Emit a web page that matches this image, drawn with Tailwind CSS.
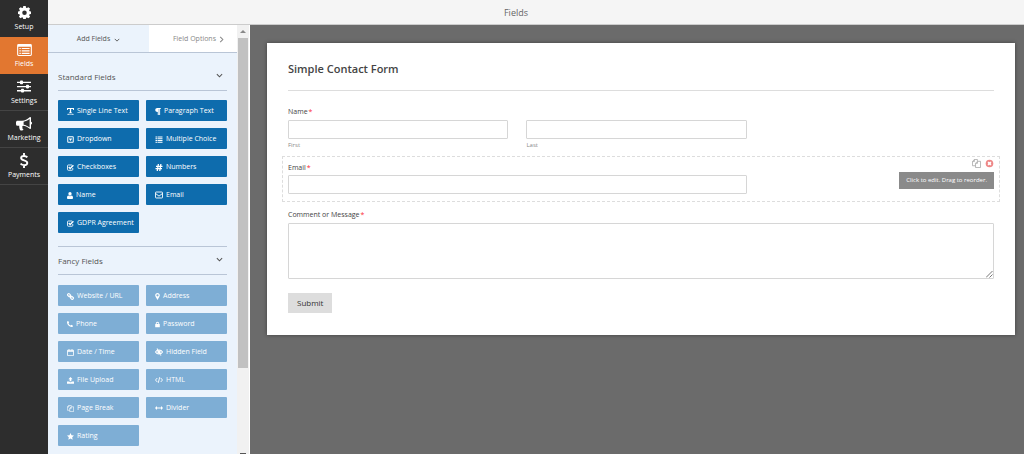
<!DOCTYPE html>
<html lang="en">
<head>
    <meta charset="UTF-8">
    <meta name="viewport" content="width=device-width, initial-scale=1.0">
    <title>Form Builder - Fields</title>
    <script src="https://cdn.jsdelivr.net/npm/@tailwindcss/browser@4"></script>
</head>
<body class="flex h-screen overflow-hidden bg-[#6b6b6b] font-['Open_Sans','Noto_Sans',sans-serif] text-[#444]">
    <!-- Icon sprite -->
    <svg class="hidden">
        <symbol id="i-gear" viewBox="0 0 16 16"><path fill-rule="evenodd" d="M6.500 0h3l.4 2.100 1.100.5 1.800-1.200 2.100 2.100-1.200 1.800.5 1.100 2.100.4v3l-2.100.4-.5 1.100 1.200 1.800-2.100 2.100-1.800-1.200-1.100.5-.4 2.100h-3l-.4-2.100-1.100-.5-1.800 1.200-2.100-2.100 1.200-1.800-.5-1.100L-.3 9.800v-3l2.100-.4.5-1.100-1.200-1.800 2.100-2.100L5 2.600l1.100-.5zM8 5.500a2.800 2.800 0 1 0 0 5.600 2.800 2.800 0 0 0 0-5.600z"/></symbol>
        <symbol id="i-list" viewBox="0 0 16 13"><path fill-rule="evenodd" d="M1.500 0h13A1.500 1.500 0 0 1 16 1.500v10a1.500 1.500 0 0 1-1.500 1.500h-13A1.500 1.500 0 0 1 0 11.500v-10A1.500 1.500 0 0 1 1.500 0zM1.200 3v8.300c0 .3.200.5.500.5h12.600c.3 0 .5-.2.500-.5V3zM2.500 4.200h1.500v1.300H2.500zM5 4.200h8.500v1.300H5zM2.500 6.800h1.500v1.300H2.500zM5 6.800h8.500v1.300H5zM2.500 9.400h1.500v1.300H2.500zM5 9.400h8.500v1.300H5z"/></symbol>
        <symbol id="i-sliders" viewBox="0 0 14 12"><path d="M0 1.200h14v1.300H0zM0 5.400h14v1.300H0zM0 9.600h14v1.300H0z"/><rect x="3" y="0" width="3" height="3.700" rx=".8"/><rect x="9" y="4.200" width="3" height="3.700" rx=".8"/><rect x="4" y="8.300" width="3" height="3.700" rx=".8"/></symbol>
        <symbol id="i-horn" viewBox="0 0 16 14"><path fill-rule="evenodd" d="M14 0c.6 0 1 .4 1 1v3.800a1.400 1.400 0 0 1 0 2.700V11c0 .6-.4 1-1 1-2.200-1.900-4.500-3-7-3.200-.8.3-1 1.200-.4 1.800-.5.800.1 1.400 1 2-.6 1.100-2.700 1.100-3.600.3-.5-1.500-1.100-2.700-.6-4.100H1.500A1.500 1.500 0 0 1 0 7.300V5.200c0-.8.700-1.500 1.500-1.500H6C8.700 3.700 11.400 2.300 14 0zM13.600 2C11.600 3.500 9.600 4.400 7.600 4.700v3.100c2 .3 4 1.200 6 2.700z"/></symbol>
        <symbol id="i-dollar" viewBox="0 0 10 16"><path fill="none" stroke="currentColor" stroke-width="2" d="M8.600 4.600C7.600 3.700 6.500 3.200 5 3.200c-1.900 0-3.100.9-3.100 2.200C1.900 8.600 8.500 7.200 8.500 10.600c0 1.400-1.300 2.300-3.300 2.300-1.700 0-2.900-.6-3.900-1.600M5 0v3M5 13v3"/></symbol>
        <symbol id="i-text" viewBox="0 0 14 14"><path d="M0 0h14v4h-1.700L12 2H8.300v7H10v1.600H4V9h1.700V2H2l-.3 2H0zM3 11l-3 1.300L3 14v-1h8v1l3-1.700L11 11v1H3z"/></symbol>
        <symbol id="i-para" viewBox="2 0 11 14"><path d="M6 0h7v2h-1.300v12H9.900V2H9v12H7V8C3.700 8 2 6.500 2 4s1.700-4 4-4z"/></symbol>
        <symbol id="i-drop" viewBox="0 0 14 14"><path fill-rule="evenodd" d="M2.500.5h9a2 2 0 0 1 2 2v9a2 2 0 0 1-2 2h-9a2 2 0 0 1-2-2v-9a2 2 0 0 1 2-2zm0 2v9h9v-9zM3.500 5h7L7 10z"/></symbol>
        <symbol id="i-choice" viewBox="0 0 14 14"><path d="M0 1h3v2H0zM4 1h10v2H4zM0 4.500h3v2H0zM4 4.500h10v2H4zM0 8h3v2H0zM4 8h10v2H4zM0 11.500h3v2H0zM4 11.500h10v2H4z"/></symbol>
        <symbol id="i-check" viewBox="0 0 14 14"><path fill="none" stroke="currentColor" stroke-width="1.700" d="M11.500 8v3a1.500 1.500 0 0 1-1.500 1.500H2.500A1.500 1.500 0 0 1 1 11V3.500A1.500 1.500 0 0 1 2.500 2H10"/><path fill="none" stroke="currentColor" stroke-width="2.800" d="M3.500 6l2.800 2.800 6.500-6.500"/></symbol>
        <symbol id="i-hash" viewBox="0 0 14 14"><path fill="none" stroke="currentColor" stroke-width="2.600" d="M5.800 0L3.500 14M10.800 0L8.500 14M1 4.700H14M0 9.300h13"/></symbol>
        <symbol id="i-user" viewBox="1 0 12 14"><path d="M7 0c2 0 3.200 1.500 3.200 3.600S9 7.500 7 7.500 3.800 5.700 3.800 3.600 5 0 7 0zM3.800 7c1.900 1.700 4.500 1.700 6.400 0C12 7.400 13 9 13 11.500c0 1.400-.7 2.500-2 2.500H3c-1.300 0-2-1.100-2-2.500C1 9 2 7.400 3.800 7z"/></symbol>
        <symbol id="i-mail" viewBox="0 0 14 14"><g fill="none" stroke="currentColor" stroke-width="1.600"><rect x=".8" y="1.800" width="12.400" height="10.400" rx="1.200"/><path d="M.8 4.200L7 9l6.200-4.800"/></g></symbol>
        <symbol id="i-link" viewBox="0 0 14 14"><g fill="none" stroke="currentColor" stroke-width="2.200"><rect x="1" y="2" width="6.500" height="4.500" rx="2" transform="rotate(45 4.200 4.200)"/><rect x="6.500" y="7.500" width="6.500" height="4.500" rx="2" transform="rotate(45 9.800 9.800)"/><path d="M5 5l4 4"/></g></symbol>
        <symbol id="i-pin" viewBox="2 0 10 14"><path fill-rule="evenodd" d="M7 0c2.700 0 4.700 2 4.700 4.600C11.700 7 8.500 10.500 7 14 5.500 10.500 2.300 7 2.300 4.600 2.300 2 4.300 0 7 0zm0 2.400a2.200 2.200 0 1 0 0 4.400 2.200 2.200 0 0 0 0-4.400z"/></symbol>
        <symbol id="i-phone" viewBox="1 1 12 12"><path d="M3.500 1l1.800 3.300L4 5.800C5 7.800 6.200 9 8.200 10l1.500-1.300L13 10.500c0 1.500-1.200 2.500-2.700 2.500C6 13 1 8 1 3.700 1 2.200 2 1 3.500 1z"/></symbol>
        <symbol id="i-lock" viewBox="1 0 12 14"><path fill-rule="evenodd" d="M3 6V4.500a4 4 0 0 1 8 0V6h.7c.5 0 .8.3.8.8v5.900c0 .5-.3.8-.8.8H2.300c-.5 0-.8-.3-.8-.8V6.800c0-.5.300-.8.800-.8zm2 0h4V4.500a2 2 0 0 0-4 0z"/></symbol>
        <symbol id="i-cal" viewBox="0 0 14 14"><path fill="none" stroke="currentColor" stroke-width="1.600" d="M1 2.500h12v10.700H1zM4 0v4M10 0v4"/><path d="M1 3h12v2.500H1z"/></symbol>
        <symbol id="i-eye" viewBox="0 0 14 14"><path fill="none" stroke="currentColor" stroke-width="1.800" d="M.7 7C3.500 2.300 10.500 2.300 13.300 7 10.500 11.700 3.500 11.700.7 7zM3.500 1l7 12"/><circle cx="7" cy="7" r="3"/></symbol>
        <symbol id="i-upload" viewBox="0 0 14 14"><path d="M7 0l4.200 4.500H8.700v4H5.300v-4H2.800zM0 9h4.200c.4 1 1.200 1.300 2.800 1.300S9.400 10 9.800 9H14v4.500H0z"/></symbol>
        <symbol id="i-code" viewBox="0 0 14 14"><path fill="none" stroke="currentColor" stroke-width="1.600" d="M4 3.500L.9 7 4 10.500M10 3.500L13.100 7 10 10.500M8.300 2L5.700 12"/></symbol>
        <symbol id="i-copy" viewBox="0 0 14 14"><path fill="none" stroke="currentColor" stroke-width="1.300" d="M5.500 10.500H.7V4L3.700.7h4.700V3M3.700.7V4h-3M8.500 3.600h4.800v9.700H5.500V6.800zM8.500 3.600v3.200h-3"/></symbol>
        <symbol id="i-arrows" viewBox="0 0 14 14"><path d="M0 7l3.500-3.500V6h7V3.500L14 7l-3.500 3.500V8h-7v2.500z"/></symbol>
        <symbol id="i-star" viewBox="0 0 14 14"><path d="M7 0l2.100 4.500 4.900.6-3.600 3.400.9 4.900L7 11l-4.300 2.400.9-4.900L0 5.100l4.900-.6z"/></symbol>
        <symbol id="i-down" viewBox="0 0 8 8"><path fill="none" stroke="currentColor" stroke-width="1.200" d="M1 2.500l3 3 3-3"/></symbol>
        <symbol id="i-right" viewBox="0 0 8 8"><path fill="none" stroke="currentColor" stroke-width="1.200" d="M2.500 1l3 3-3 3"/></symbol>
    </svg>

    <!-- Main navigation -->
    <nav class="flex w-12 shrink-0 flex-col bg-[#2d2d2d] text-[7px] leading-[10px] text-white">
        <a href="#" class="flex h-[37px] flex-col items-center justify-end gap-[3px] pb-[5px]"><svg class="h-[13px] w-[13px] fill-current"><use href="#i-gear"/></svg>Setup</a>
        <a href="#" class="flex h-[37px] flex-col items-center justify-end gap-[3px] bg-[#e27730] pb-[5px]"><svg class="h-3 w-[15px] fill-current"><use href="#i-list"/></svg>Fields</a>
        <a href="#" class="flex h-[37px] flex-col items-center justify-end gap-[3px] border-b border-[#444] pb-1"><svg class="h-[13px] w-[14px] fill-current"><use href="#i-sliders"/></svg>Settings</a>
        <a href="#" class="flex h-[37px] flex-col items-center justify-end gap-[2px] border-b border-[#444] pb-1"><svg class="h-[14px] w-4 fill-current"><use href="#i-horn"/></svg>Marketing</a>
        <a href="#" class="flex h-[37px] flex-col items-center justify-end gap-[2px] border-b border-[#444] pb-1"><svg class="h-[15px] w-[10px] fill-current"><use href="#i-dollar"/></svg>Payments</a>
    </nav>

    <div class="flex min-w-0 flex-1 flex-col">
        <header class="flex h-[25px] shrink-0 items-center justify-center border-b border-[#ccc] bg-[#f5f5f5] pt-[2px] pr-10 text-[9px] text-[#666]">
            <h1>Fields</h1>
        </header>

        <div class="flex min-h-0 flex-1">
            <!-- Field picker -->
            <aside class="flex w-[202px] shrink-0 border-r border-white bg-[#ebf3fc]">
                <div class="min-w-0 flex-1 overflow-hidden">
                    <div class="flex h-7 border-b border-[#b9c5d6] text-[7px]">
                        <button class="flex w-[101px] items-center justify-center gap-1 pt-[2px] text-[#555]">Add Fields <svg class="h-[6px] w-[6px]"><use href="#i-down"/></svg></button>
                        <button class="flex flex-1 items-center justify-end gap-[2px] bg-white pt-[2px] pr-3 text-[#888]">Field Options <svg class="h-[7px] w-[7px]"><use href="#i-right"/></svg></button>
                    </div>

                    <section class="px-[10px] pt-[10px]">
                        <button class="flex h-7 w-full items-center justify-between border-b border-[#b9c5d6] pr-1 text-[8px] text-[#555]">Standard Fields <svg class="mb-[2px] h-[7px] w-[7px]"><use href="#i-down"/></svg></button>
                        <div class="mt-[9px] grid grid-cols-2 gap-[7px] text-[7px] text-white">
                            <button class="flex h-[21px] items-center gap-[3px] rounded-[1px] bg-[#0e6cad] pt-px pl-[9px]"><svg class="h-[7px] w-[7px] fill-current"><use href="#i-text"/></svg>Single Line Text</button>
                            <button class="flex h-[21px] items-center gap-[3px] rounded-[1px] bg-[#0e6cad] pt-px pl-[9px]"><svg class="h-[7px] w-[6px] fill-current"><use href="#i-para"/></svg>Paragraph Text</button>
                            <button class="flex h-[21px] items-center gap-[3px] rounded-[1px] bg-[#0e6cad] pt-px pl-[9px]"><svg class="h-[7px] w-[7px] fill-current"><use href="#i-drop"/></svg>Dropdown</button>
                            <button class="flex h-[21px] items-center gap-[3px] rounded-[1px] bg-[#0e6cad] pt-px pl-[9px]"><svg class="h-[7px] w-[8px] fill-current"><use href="#i-choice"/></svg>Multiple Choice</button>
                            <button class="flex h-[21px] items-center gap-[3px] rounded-[1px] bg-[#0e6cad] pt-px pl-[9px]"><svg class="h-[7px] w-[7px] fill-current"><use href="#i-check"/></svg>Checkboxes</button>
                            <button class="flex h-[21px] items-center gap-[3px] rounded-[1px] bg-[#0e6cad] pt-px pl-[9px]"><svg class="h-[7px] w-[8px] fill-current"><use href="#i-hash"/></svg>Numbers</button>
                            <button class="flex h-[21px] items-center gap-[3px] rounded-[1px] bg-[#0e6cad] pt-px pl-[9px]"><svg class="h-[7px] w-[6px] fill-current"><use href="#i-user"/></svg>Name</button>
                            <button class="flex h-[21px] items-center gap-[3px] rounded-[1px] bg-[#0e6cad] pt-px pl-[9px]"><svg class="h-[8px] w-[8px] fill-current"><use href="#i-mail"/></svg>Email</button>
                            <button class="flex h-[21px] items-center gap-[3px] rounded-[1px] bg-[#0e6cad] pt-px pl-[9px]"><svg class="h-[7px] w-[7px] fill-current"><use href="#i-check"/></svg>GDPR Agreement</button>
                        </div>
                    </section>

                    <section class="px-[10px] pt-[13px]">
                        <button class="flex h-[29px] w-full items-center justify-between border-y border-[#b9c5d6] pr-1 text-[8px] text-[#555]">Fancy Fields <svg class="mb-[2px] h-[7px] w-[7px]"><use href="#i-down"/></svg></button>
                        <div class="mt-[10px] grid grid-cols-2 gap-[7px] text-[7px] text-white">
                            <button class="flex h-[21px] items-center gap-[3px] rounded-[1px] bg-[#7eaed5] pt-px pl-[9px]"><svg class="h-[7px] w-[7px] fill-current"><use href="#i-link"/></svg>Website / URL</button>
                            <button class="flex h-[21px] items-center gap-[3px] rounded-[1px] bg-[#7eaed5] pt-px pl-[9px]"><svg class="h-[7px] w-[5px] fill-current"><use href="#i-pin"/></svg>Address</button>
                            <button class="flex h-[21px] items-center gap-[3px] rounded-[1px] bg-[#7eaed5] pt-px pl-[9px]"><svg class="h-[6px] w-[6px] fill-current"><use href="#i-phone"/></svg>Phone</button>
                            <button class="flex h-[21px] items-center gap-[3px] rounded-[1px] bg-[#7eaed5] pt-px pl-[9px]"><svg class="h-[7px] w-[5px] fill-current"><use href="#i-lock"/></svg>Password</button>
                            <button class="flex h-[21px] items-center gap-[3px] rounded-[1px] bg-[#7eaed5] pt-px pl-[9px]"><svg class="h-[7px] w-[7px] fill-current"><use href="#i-cal"/></svg>Date / Time</button>
                            <button class="flex h-[21px] items-center gap-[3px] rounded-[1px] bg-[#7eaed5] pt-px pl-[9px]"><svg class="h-[8px] w-[8px] fill-current"><use href="#i-eye"/></svg>Hidden Field</button>
                            <button class="flex h-[21px] items-center gap-[3px] rounded-[1px] bg-[#7eaed5] pt-px pl-[9px]"><svg class="h-[7px] w-[7px] fill-current"><use href="#i-upload"/></svg>File Upload</button>
                            <button class="flex h-[21px] items-center gap-[3px] rounded-[1px] bg-[#7eaed5] pt-px pl-[9px]"><svg class="h-[8px] w-[8px] fill-current"><use href="#i-code"/></svg>HTML</button>
                            <button class="flex h-[21px] items-center gap-[3px] rounded-[1px] bg-[#7eaed5] pt-px pl-[9px]"><svg class="h-[7px] w-[7px] fill-current"><use href="#i-copy"/></svg>Page Break</button>
                            <button class="flex h-[21px] items-center gap-[3px] rounded-[1px] bg-[#7eaed5] pt-px pl-[9px]"><svg class="h-[8px] w-[8px] fill-current"><use href="#i-arrows"/></svg>Divider</button>
                            <button class="flex h-[21px] items-center gap-[3px] rounded-[1px] bg-[#7eaed5] pt-px pl-[9px]"><svg class="h-[7px] w-[7px] fill-current"><use href="#i-star"/></svg>Rating</button>
                        </div>
                    </section>
                </div>
                <!-- Scrollbar -->
                <div class="flex w-3 shrink-0 flex-col items-center bg-[#f1f1f1]">
                    <svg class="my-[5px] h-[3px] w-[6px] shrink-0 fill-[#888]" viewBox="0 0 6 3"><path d="M3 0l3 3H0z"/></svg>
                    <div class="h-[330px] w-[10px] shrink-0 bg-[#c1c1c1]"></div>
                    <svg class="mt-auto h-[1px] w-[6px] fill-[#555]" viewBox="0 0 6 1"><path d="M0 0h6v1H0z"/></svg>
                </div>
            </aside>

            <!-- Form preview -->
            <main class="min-w-0 flex-1 pt-[18px] pr-[9px] pl-[17px]">
                <form class="bg-white px-[21px] pt-[18px] pb-[22px] text-[7px] leading-[10px] shadow-[0_0_4px_rgba(0,0,0,0.4)]">
                    <h2 class="border-b border-[#ddd] pb-[14px] text-[11px] leading-[15px] font-semibold">Simple Contact Form</h2>

                    <fieldset class="mt-4">
                        <legend class="mb-[3px] block">Name<span class="ml-px text-red-500">*</span></legend>
                        <div class="grid w-[65%] grid-cols-2 gap-[18px]">
                            <div class="flex flex-col gap-[1px]">
                                <input id="first" type="text" class="h-[19px] rounded-[1px] border border-[#d6d6d6] px-1">
                                <label for="first" class="text-[6px] text-[#888]">First</label>
                            </div>
                            <div class="flex flex-col gap-[1px]">
                                <input id="last" type="text" class="h-[19px] rounded-[1px] border border-[#d6d6d6] px-1">
                                <label for="last" class="text-[6px] text-[#888]">Last</label>
                            </div>
                        </div>
                    </fieldset>

                    <div class="relative -mx-[6px] mt-[6px] border border-dashed border-[#ddd] px-[5px] pt-[6px] pb-[7px]">
                        <label for="email" class="mb-[2px] block">Email<span class="ml-px text-red-500">*</span></label>
                        <input id="email" type="text" class="block h-[19px] w-[65%] rounded-[1px] border border-[#d6d6d6] px-1">
                        <div class="absolute top-[2px] right-[5px] flex flex-col items-end gap-1">
                            <div class="flex gap-1">
                                <button type="button" aria-label="Duplicate" class="text-[#aaa]"><svg class="h-[9px] w-[9px]"><use href="#i-copy"/></svg></button>
                                <button type="button" aria-label="Delete" class="text-[#e88]"><svg class="h-[9px] w-[9px]" viewBox="0 0 9 9"><circle cx="4.500" cy="4.500" r="3.800" fill="currentColor"/><path stroke="#fff" stroke-width="1.600" d="M3.100 3.100l2.800 2.800M5.900 3.100L3.100 5.900"/></svg></button>
                            </div>
                            <span class="bg-[#8a8a8a] px-[7px] py-1 text-[6px] leading-[9px] font-medium text-white">Click to edit. Drag to reorder.</span>
                        </div>
                    </div>

                    <div class="relative mt-[8px]">
                        <label for="message" class="mb-[3px] block">Comment or Message<span class="ml-px text-red-500">*</span></label>
                        <textarea id="message" class="block h-14 w-full resize-none rounded-[1px] border border-[#d6d6d6] p-1"></textarea>
                        <svg class="absolute right-[1px] bottom-[1px] h-[7px] w-[7px] stroke-[#777]" viewBox="0 0 7 7"><path d="M0 6.500L6.500 0M3.500 6.500l3-3"/></svg>
                    </div>

                    <button type="button" class="mt-[14px] block h-5 bg-[#ddd] px-[9px] text-[8px] text-[#333]">Submit</button>
                </form>
            </main>
        </div>
    </div>
</body>
</html>
